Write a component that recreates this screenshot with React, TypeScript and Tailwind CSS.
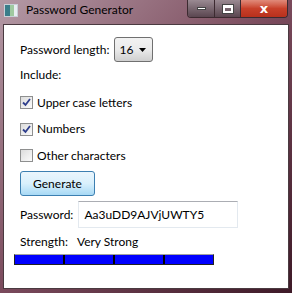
import React from "react";

const font = { fontFamily: "Lato, 'Noto Sans', sans-serif" };

function CheckRow({ label, checked }: { label: string; checked: boolean }) {
	return (
		<div className="flex items-center h-[13px] gap-[4px]">
			<span className="w-[13px] h-[13px] border border-[#8e8f8f] bg-gradient-to-br from-[#dcdcdc] to-[#fbfbfb] flex items-center justify-center">
				{checked && (
					<svg width="9" height="9" viewBox="0 0 9 9">
						<path d="M1 4.5 L3.5 7 L8 1" fill="none" stroke="#2e3e8c" strokeWidth="1.8" />
					</svg>
				)}
			</span>
			<span className="text-[12px] text-black leading-none">{label}</span>
		</div>
	);
}

export default function App() {
	return (
		<div
			className="w-[292px] h-[293px] flex flex-col bg-gradient-to-br from-[#b49aa6] via-[#7a4a5c] to-[#3e1a28]"
			style={font}
		>
			{/* Title bar */}
			<div className="h-[24px] flex items-start pr-[4px] shrink-0">
				<div className="flex items-center h-[20px] pl-[4px] gap-[8px] flex-1">
					<span className="w-[14px] h-[13px] flex border border-[#c8d0d8] bg-white">
						<span className="w-[5px] bg-[#3a7d8a]" />
						<span className="w-[4px] bg-[#9fc9a0]" />
						<span className="flex-1 bg-[#e8eef2]" />
					</span>
					<span className="text-[12px] text-black leading-none">Password Generator</span>
				</div>
				<div className="flex h-[18px] rounded-b-[4px] border border-t-0 border-[#3c2a30] overflow-hidden">
					<span className="w-[27px] flex items-center justify-center bg-gradient-to-b from-[#9a8a92] to-[#5a4650] border-r border-[#3c2a30]">
						<span className="w-[9px] h-[3px] bg-white border border-[#444]" />
					</span>
					<span className="w-[26px] flex items-center justify-center bg-gradient-to-b from-[#9a8a92] to-[#5a4650] border-r border-[#3c2a30]">
						<span className="w-[10px] h-[8px] border-2 border-white border-t-[3px] outline outline-1 outline-[#444]" />
					</span>
					<span className="w-[46px] flex items-center justify-center bg-gradient-to-b from-[#e08a7a] via-[#c8402a] to-[#b8301c]">
						<span className="text-white text-[13px] font-bold leading-none" style={{ fontFamily: "'DejaVu Sans', sans-serif" }}>
							x
						</span>
					</span>
				</div>
			</div>

			{/* Client area */}
			<div className="mx-[3px] h-[265px] border border-[#4a3a40] bg-white px-[16px] pt-[12px] flex flex-col">
				<div className="flex items-center gap-[4px] h-[25px]">
					<span className="text-[12px] leading-none">Password length:</span>
					<span className="w-[39px] h-[25px] rounded-[3px] border border-[#707070] bg-gradient-to-b from-[#f2f2f2] via-[#ebebeb] to-[#cfcfcf] flex items-center justify-between pl-[5px] pr-[6px]">
						<span className="text-[12px] leading-none">16</span>
						<svg width="7" height="4" viewBox="0 0 7 4">
							<path d="M0 0 L7 0 L3.5 4 Z" fill="#000" />
						</svg>
					</span>
				</div>
				<div className="mt-[7px] text-[12px] leading-none h-[12px]">Include:</div>
				<div className="mt-[15px] flex flex-col gap-[13.5px]">
					<CheckRow label="Upper case letters" checked />
					<CheckRow label="Numbers" checked />
					<CheckRow label="Other characters" checked={false} />
				</div>
				<button
					type="button"
					className="mt-[9px] w-[75px] h-[25px] rounded-[3px] border border-[#3c7fb1] bg-gradient-to-b from-[#eaf6fd] via-[#d9f0fc] to-[#a7d9f5] text-[12px] leading-none text-black"
					style={font}
				>
					Generate
				</button>
				<div className="mt-[5px] flex items-center gap-[5px]">
					<span className="text-[12px] leading-none">Password:</span>
					<span className="w-[160px] h-[27px] border border-[#e3e9ef] border-t-[#abadb3] flex items-center pl-[5px] text-[12px] leading-none">
						Aa3uDD9AJVjUWTY5
					</span>
				</div>
				<div className="mt-[7px] flex items-center gap-[9px] h-[14px]">
					<span className="text-[12px] leading-none">Strength:</span>
					<span className="text-[12px] leading-none">Very Strong</span>
				</div>
				<div className="mt-[5px] -ml-[6px] w-[200px] h-[11px] flex border border-[#222] border-t-[#a0a0a0]">
					{[0, 1, 2, 3].map((i) => (
						<span
							key={i}
							className={`flex-1 bg-[#0000ff] ${i < 3 ? "border-r-2 border-black" : ""}`}
						/>
					))}
				</div>
			</div>
		</div>
	);
}
